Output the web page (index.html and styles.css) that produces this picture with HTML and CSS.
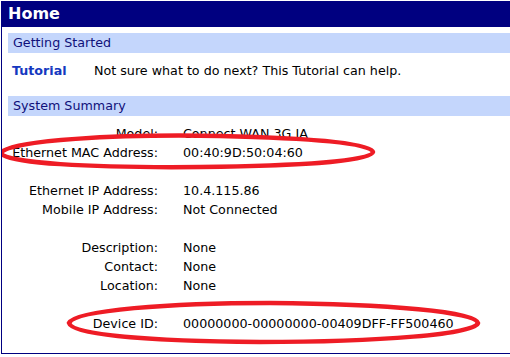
FILE: index.html
```html
<!DOCTYPE html>
<html>
<head>
<meta charset="utf-8">
<link rel="stylesheet" href="styles.css">
</head>
<body>
<div class="frame">
  <div class="title">Home</div>
  <div class="content">
    <div class="section">Getting Started</div>
    <div class="tut-row">
      <a class="tut-link">Tutorial</a>
      <span class="tut-desc">Not sure what to do next? This Tutorial can help.</span>
    </div>
    <div class="section">System Summary</div>
    <div class="summary">
      <div class="lbl">Model:</div><div class="val">Connect WAN 3G IA</div>
      <div class="lbl">Ethernet MAC Address:</div><div class="val">00:40:9D:50:04:60</div>
      <div class="gap"></div>
      <div class="lbl">Ethernet IP Address:</div><div class="val">10.4.115.86</div>
      <div class="lbl">Mobile IP Address:</div><div class="val">Not Connected</div>
      <div class="gap"></div>
      <div class="lbl">Description:</div><div class="val">None</div>
      <div class="lbl">Contact:</div><div class="val">None</div>
      <div class="lbl">Location:</div><div class="val">None</div>
      <div class="gap"></div>
      <div class="lbl">Device ID:</div><div class="val">00000000-00000000-00409DFF-FF500460</div>
    </div>
  </div>
  <svg class="marks" width="510" height="357" viewBox="0 0 510 357">
    <path d="M1 153 C 8 140, 120 134, 220 136 C 310 138, 372 143, 373 152 C 372 161, 300 166, 200 167 C 90 168, 4 163, 1 153 Z" fill="none" stroke="#ee1c25" stroke-width="4.5"/>
    <path d="M69 323 C 75 310, 170 303, 270 303 C 390 304, 476 312, 478 323 C 476 334, 380 342, 260 342 C 150 341, 72 335, 69 323 Z" fill="none" stroke="#ee1c25" stroke-width="4.5"/>
  </svg>
</div>
</body>
</html>
```
FILE: styles.css
```css
html, body {
  margin: 0;
  padding: 0;
  background: #ffffff;
  overflow: hidden;
}
body {
  font-family: "DejaVu Sans", Verdana, sans-serif;
  font-size: 12.7px;
  color: #000000;
}
.frame {
  position: relative;
  margin: 1px 0 0 1px;
  width: 509px;
  height: 353px;
  border-left: 1px solid #000080;
  border-bottom: 1px solid #000080;
  box-sizing: border-box;
  overflow: hidden;
}
.title {
  background: #000080;
  color: #ffffff;
  font-weight: bold;
  font-size: 16px;
  height: 26px;
  line-height: 26px;
  padding-left: 6px;
}
.content {
  padding: 6px 0 0 6px;
}
.section {
  background: #c4d6fc;
  color: #10107a;
  height: 20px;
  line-height: 20px;
  padding-left: 5px;
}
.tut-row {
  display: flex;
  height: 43px;
  align-items: flex-start;
  padding-top: 10px;
  box-sizing: border-box;
  padding-left: 4px;
  line-height: 15px;
}
.tut-link {
  color: #1538c0;
  font-weight: bold;
  width: 82px;
}
.tut-desc {
  color: #000;
}
.summary {
  display: grid;
  grid-template-columns: 150px auto;
  column-gap: 25px;
  grid-auto-rows: 19px;
  line-height: 19px;
  padding-top: 8px;
}
.lbl {
  text-align: right;
}
.gap {
  grid-column: 1 / span 2;
}
.marks {
  position: absolute;
  left: -2px;
  top: -1px;
  pointer-events: none;
}
```
